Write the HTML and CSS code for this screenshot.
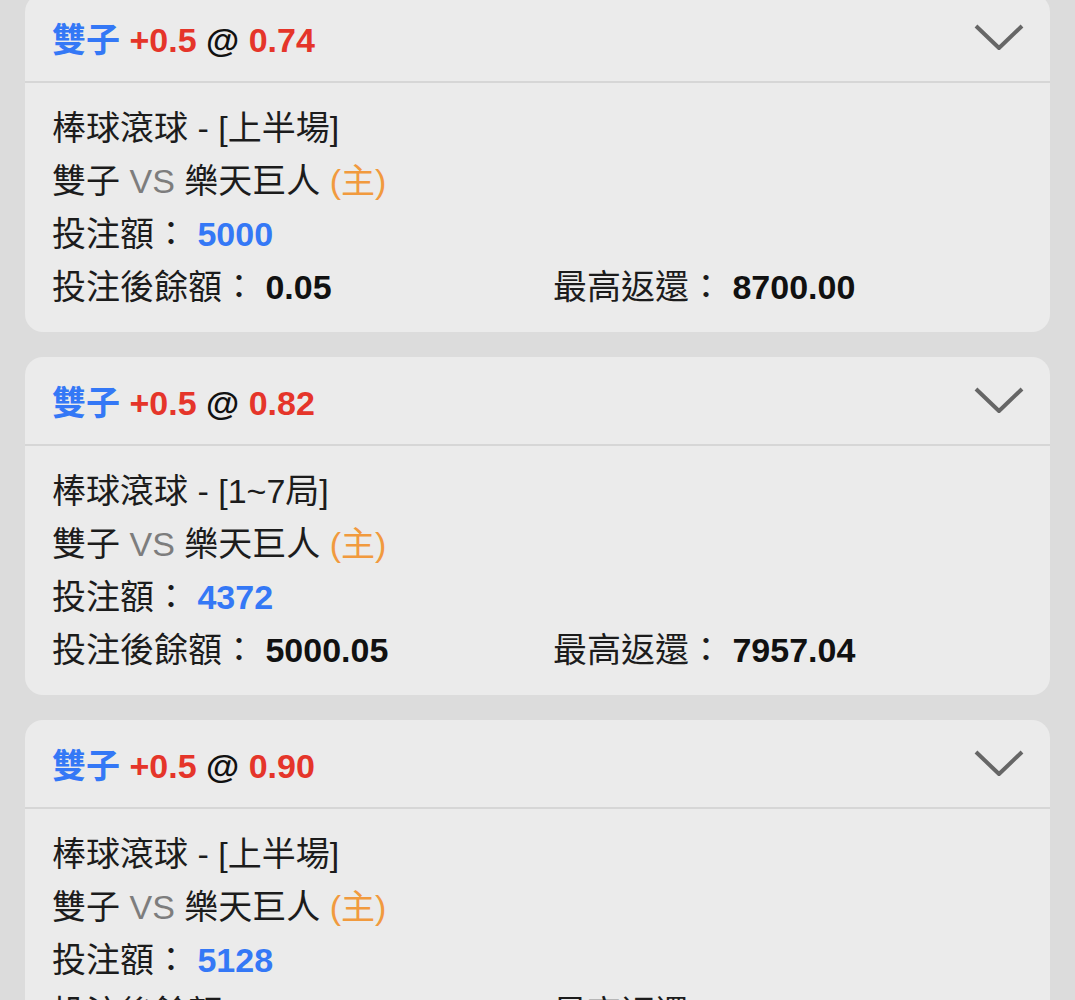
FILE: index.html
```html
<!DOCTYPE html>
<html lang="zh-Hant">
<head>
    <meta charset="UTF-8">
    <title>注單</title>
    <link rel="stylesheet" href="styles.css">
</head>
<body>
    <div class="bet-list">
        <div class="bet-card">
            <div class="bet-head">
                <div class="bet-title">
                    <span class="team">雙子</span>
                    <span class="odds">+0.5</span>
                    <span class="at">@</span>
                    <span class="odds">0.74</span>
                </div>
                <svg class="chevron" width="50" height="28" viewBox="0 0 50 28">
                    <polyline points="2,3 25,25 48,3" fill="none" stroke="#666" stroke-width="4" stroke-linejoin="round"/>
                </svg>
            </div>
            <div class="bet-body">
                <div class="line">棒球滾球 - [上半場]</div>
                <div class="line">雙子 <span class="vs">VS</span> 樂天巨人 <span class="home">(主)</span></div>
                <div class="line">投注額： <span class="stake">5000</span></div>
                <div class="line split">
                    <div>投注後餘額： <b>0.05</b></div>
                    <div>最高返還： <b>8700.00</b></div>
                </div>
            </div>
        </div>

        <div class="bet-card">
            <div class="bet-head">
                <div class="bet-title">
                    <span class="team">雙子</span>
                    <span class="odds">+0.5</span>
                    <span class="at">@</span>
                    <span class="odds">0.82</span>
                </div>
                <svg class="chevron" width="50" height="28" viewBox="0 0 50 28">
                    <polyline points="2,3 25,25 48,3" fill="none" stroke="#666" stroke-width="4" stroke-linejoin="round"/>
                </svg>
            </div>
            <div class="bet-body">
                <div class="line">棒球滾球 - [1~7局]</div>
                <div class="line">雙子 <span class="vs">VS</span> 樂天巨人 <span class="home">(主)</span></div>
                <div class="line">投注額： <span class="stake">4372</span></div>
                <div class="line split">
                    <div>投注後餘額： <b>5000.05</b></div>
                    <div>最高返還： <b>7957.04</b></div>
                </div>
            </div>
        </div>

        <div class="bet-card">
            <div class="bet-head">
                <div class="bet-title">
                    <span class="team">雙子</span>
                    <span class="odds">+0.5</span>
                    <span class="at">@</span>
                    <span class="odds">0.90</span>
                </div>
                <svg class="chevron" width="50" height="28" viewBox="0 0 50 28">
                    <polyline points="2,3 25,25 48,3" fill="none" stroke="#666" stroke-width="4" stroke-linejoin="round"/>
                </svg>
            </div>
            <div class="bet-body">
                <div class="line">棒球滾球 - [上半場]</div>
                <div class="line">雙子 <span class="vs">VS</span> 樂天巨人 <span class="home">(主)</span></div>
                <div class="line">投注額： <span class="stake">5128</span></div>
                <div class="line split">
                    <div>投注後餘額： <b>0.05</b></div>
                    <div>最高返還： <b>6566.84</b></div>
                </div>
            </div>
        </div>
    </div>
</body>
</html>
```

FILE: styles.css
```css
body {
    margin: 0;
    background: #dcdcdc;
    font-family: "Liberation Sans", "Noto Sans CJK TC", sans-serif;
    font-size: 34px;
    color: #1c1c1c;
    overflow: hidden;
}
.bet-list {
    display: flex;
    flex-direction: column;
    gap: 25px;
    padding: 0 25px;
    margin-top: -6px;
}
.bet-card {
    background: #ebebeb;
    border-radius: 18px;
}
.bet-head {
    height: 87px;
    display: flex;
    align-items: center;
    justify-content: space-between;
    padding: 0 26px 0 27px;
    border-bottom: 2px solid #d6d6d6;
}
.bet-title {
    font-weight: bold;
    color: #111;
}
.bet-title .team {
    color: #3478f6;
}
.bet-title .odds {
    color: #e5352a;
}
.chevron {
    display: block;
    margin-top: -2px;
}
.bet-body {
    padding: 19px 27px 18px;
}
.line {
    line-height: 53px;
    white-space: nowrap;
}
.vs {
    color: #7d7d7d;
}
.home {
    color: #f19a3e;
}
.stake {
    color: #3478f6;
    font-weight: bold;
}
.split {
    display: grid;
    grid-template-columns: 501px 1fr;
}
.split b {
    color: #111;
}
```
